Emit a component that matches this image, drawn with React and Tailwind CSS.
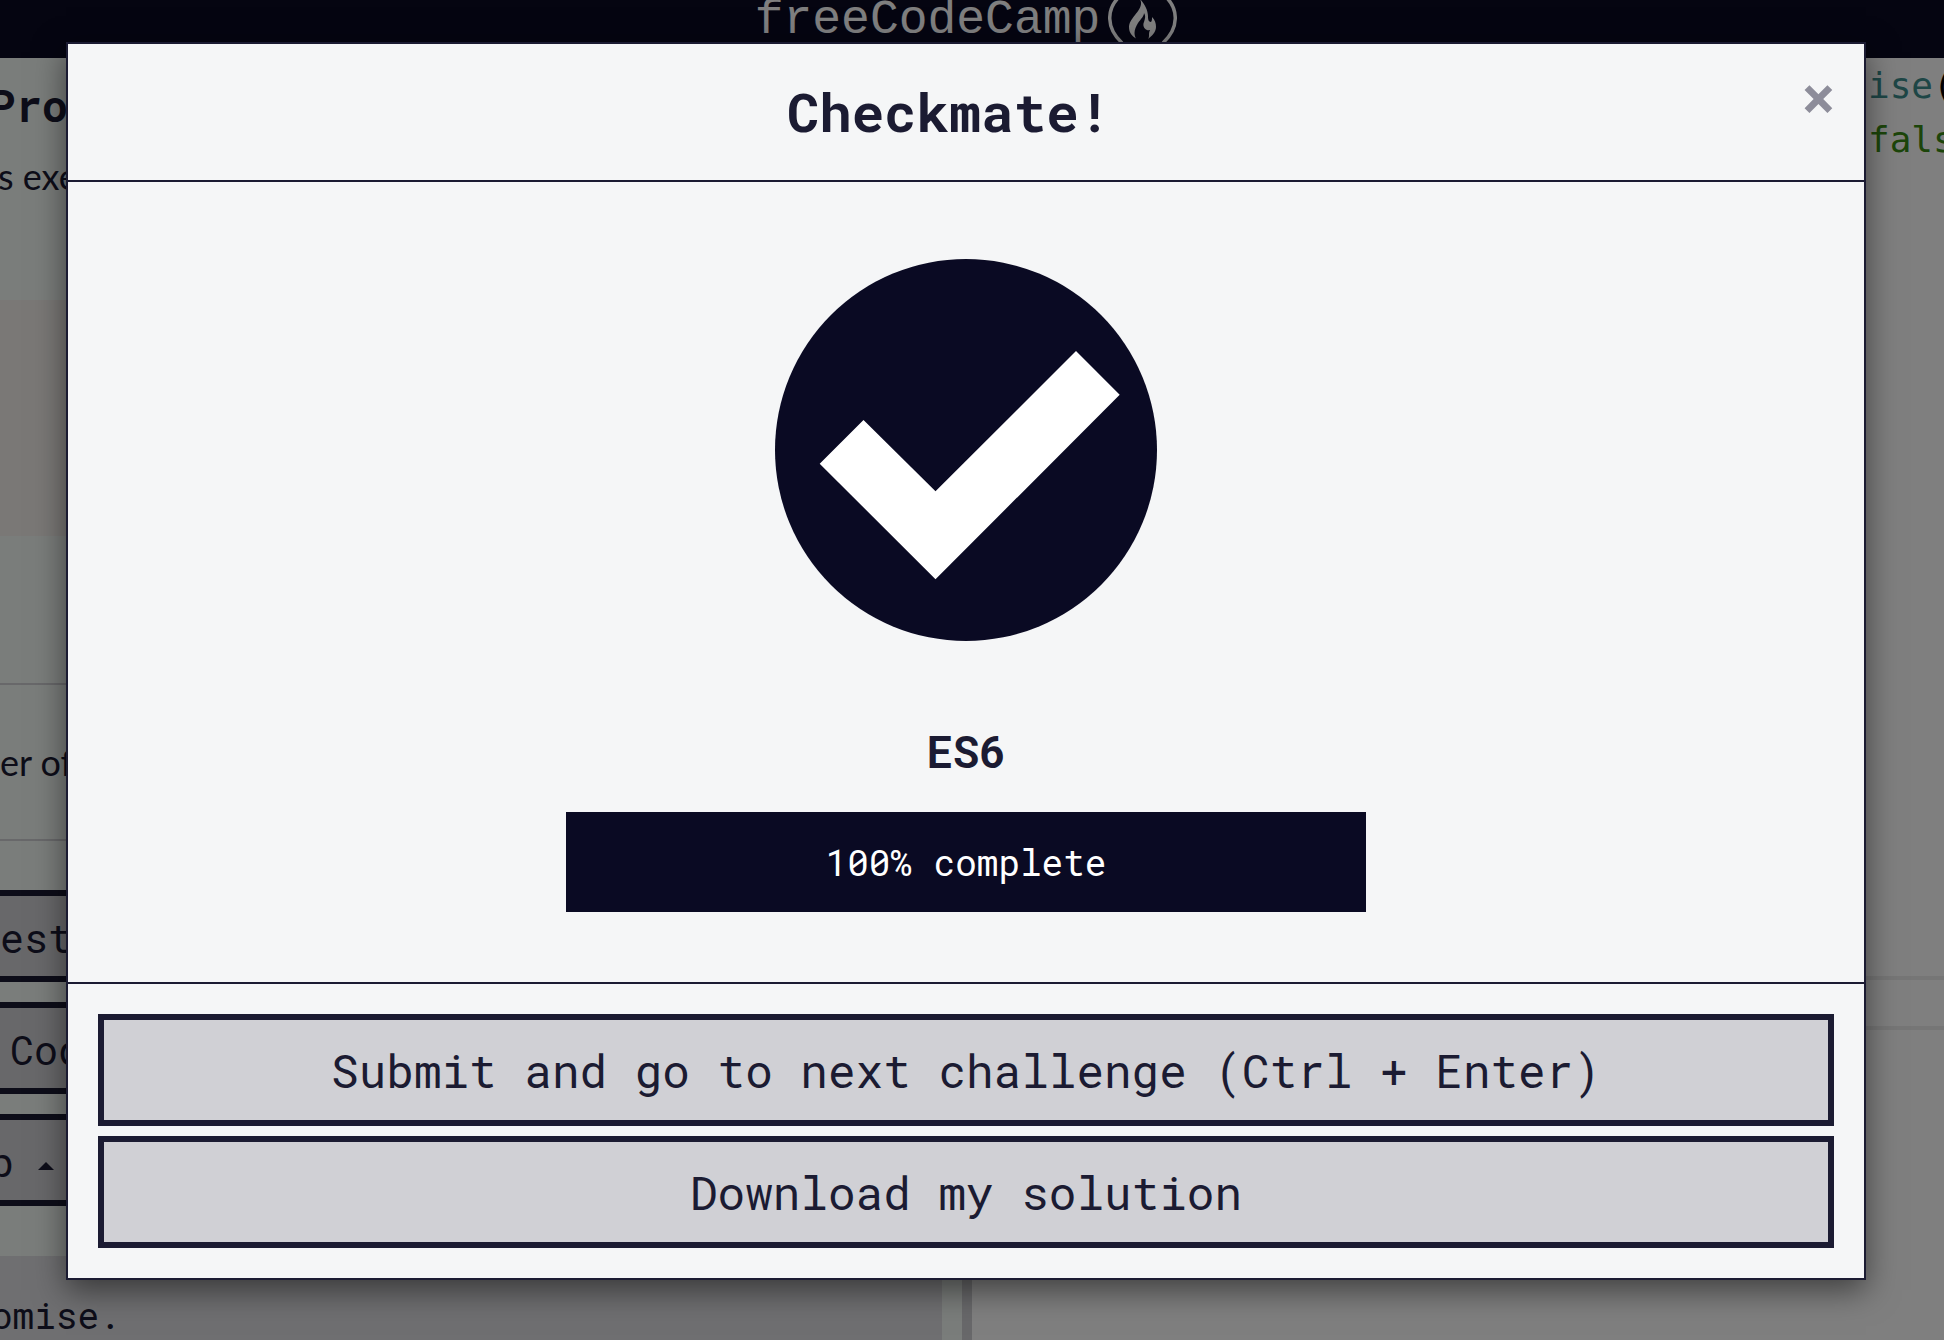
import React from "react";

const mono = "font-['Roboto_Mono','DejaVu_Sans_Mono',monospace]";

function Logo() {
  return (
    <a
      href="#home"
      aria-label="freeCodeCamp"
      className="flex h-[58px] items-start justify-center gap-2 overflow-hidden pr-3 text-white"
    >
      <span className="-mt-[10px] font-['Liberation_Mono',monospace] text-[48px] leading-[60px]">
        freeCodeCamp
      </span>
      <svg width="69" height="58" viewBox="0 0 69 58" fill="none" aria-hidden="true">
        <path d="M12 -4C-2 9 -2 28 14 43M57 -4C71 9 71 28 55 43" stroke="currentColor" strokeWidth="3.5" />
        <path
          d="M32-1C35 5 31 10 27 15C23 20 21 23 21 27C21 33 24 36 28 38.5C25 33 27 28 30 23C33 19 36 16 36 13C38 16 37 19 36 22C34 26 37 31 42 30C40 34 42 36 40 39C44 36 48 32 48 27C48 23 47 20 44 17C44 19 44 21 43 22C40 22 40 18 40 16C40 10 36 3 32-1Z"
          fill="currentColor"
        />
      </svg>
    </a>
  );
}

function SideButton({ children, className }) {
  return (
    <button
      type="button"
      className={`flex h-[92px] w-full items-center whitespace-pre border-y-[6px] border-[#1b1b32] bg-[#d0d0d5] pt-1 text-[40px] ${mono} ${className}`}
    >
      {children}
    </button>
  );
}

function Instructions() {
  return (
    <section className="flex w-1/2 min-w-0 max-w-[962px] shrink-0 flex-col overflow-hidden bg-[#f5faf7] text-[#1b1b32]">
      <h1 className={`-ml-[11px] mt-[15px] text-[44px] leading-[64px] font-bold ${mono}`}>Pro</h1>
      <p className="-ml-[2px] mt-3 font-[Lato,sans-serif] text-[36px] leading-[54px]">s exe</p>
      <div className="mt-[97px] h-[236px] shrink-0 bg-[#f5f0ed]" />
      <hr className="mt-[147px] border-t-2 border-[#d0d0d5]" />
      <p className="flex h-[154px] shrink-0 items-center font-[Lato,sans-serif] text-[36px]">er of</p>
      <hr className="border-t-2 border-[#d0d0d5]" />
      <div className="mt-[49px] flex flex-col gap-5">
        <SideButton>est</SideButton>
        <SideButton className="pl-[10px]">Cod</SideButton>
        <SideButton className="-ml-[10px]">
          p
          <svg className="ml-6 mt-2" width="16" height="8" viewBox="0 0 16 8" aria-hidden="true">
            <path d="M0 8L8 0L16 8Z" fill="currentColor" />
          </svg>
        </SideButton>
      </div>
      <div className="mr-5 mt-[50px] grow bg-[#dfdfe2] pt-[34px]">
        <p className={`-ml-[9px] text-[36px] leading-[50px] ${mono}`}>omise.</p>
      </div>
    </section>
  );
}

function Editor() {
  return (
    <section className="flex min-w-0 grow flex-col overflow-hidden border-l-[10px] border-[#d0d0d5] bg-white">
      <pre className="self-end pt-px">
        <code className="block w-[76px] font-['DejaVu_Sans_Mono',monospace] text-[36px] leading-[54px]">
          <span className="text-[#3c8d8d]">ise</span>(
        </code>
        <code className="block w-[76px] font-['DejaVu_Sans_Mono',monospace] text-[36px] leading-[54px] text-[#388a14]">
          fals
        </code>
      </pre>
      <hr className="mt-auto border-t-4 border-[#ececec]" />
      <hr className="mb-[310px] mt-[46px] border-t-4 border-[#ececec]" />
    </section>
  );
}

function CheckBadge() {
  return (
    <svg width="382" height="382" viewBox="0 0 382 382" role="img" aria-label="Passed">
      <circle cx="191" cy="191" r="191" fill="#0a0a23" />
      <path d="M88.5 161L44.7 204.7L160.5 320.3L344.7 135.7L301 92L160.5 232.3Z" fill="#fff" />
    </svg>
  );
}

function ActionButton({ children }) {
  return (
    <button
      type="button"
      className="h-28 w-full border-[6px] border-[#1b1b32] bg-[#d0d0d5] text-center text-[46px]"
    >
      {children}
    </button>
  );
}

function CompletionDialog() {
  return (
    <div
      role="dialog"
      aria-modal="true"
      aria-labelledby="dialog-title"
      className={`w-full max-w-[1800px] border-2 border-[#1b1b32] bg-[#f5f6f7] text-[#1b1b32] shadow-[0_10px_30px_rgba(0,0,0,0.5)] ${mono}`}
    >
      <header className="flex items-start border-b-2 border-[#1b1b32] pl-[30px] pr-7 py-[30px]">
        <h2 id="dialog-title" className="grow text-center text-[54px] leading-[74px] font-bold">
          Checkmate!
        </h2>
        <button
          type="button"
          aria-label="Close"
          className="mb-8 w-9 text-center text-[60px] leading-[44px] font-bold text-[#8d8d9a]"
        >
          ×
        </button>
      </header>
      <div className="flex flex-col items-center px-8 pb-[70px] pt-[77px]">
        <CheckBadge />
        <h3 className="mt-20 text-[44px] leading-[60px] font-bold">ES6</h3>
        <div
          role="progressbar"
          aria-valuenow={100}
          aria-valuemin={0}
          aria-valuemax={100}
          className="mt-[31px] flex h-[100px] w-full max-w-[800px] items-center justify-center bg-[#0a0a23] text-[36px] text-white"
        >
          100% complete
        </div>
      </div>
      <footer className="flex flex-col gap-[10px] border-t-2 border-[#1b1b32] p-[30px]">
        <ActionButton>Submit and go to next challenge (Ctrl + Enter)</ActionButton>
        <ActionButton>Download my solution</ActionButton>
      </footer>
    </div>
  );
}

export default function App() {
  return (
    <div className="relative flex h-screen flex-col overflow-hidden">
      <nav className="bg-[#0a0a23]">
        <Logo />
      </nav>
      <main className="flex min-h-0 grow">
        <Instructions />
        <Editor />
      </main>
      <div className="absolute inset-0 flex items-start justify-center bg-black/50 pl-[66px] pr-[78px] pt-[42px]">
        <CompletionDialog />
      </div>
    </div>
  );
}
